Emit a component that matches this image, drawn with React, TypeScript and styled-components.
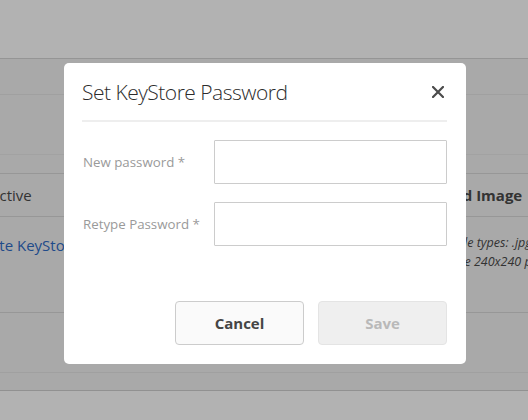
import React from 'react'
import styled, { createGlobalStyle } from 'styled-components'

const GlobalStyle = createGlobalStyle`
  html, body {
    margin: 0;
    padding: 0;
    background: #ffffff;
    font-family: "Open Sans", "Liberation Sans", sans-serif;
    overflow: hidden;
  }
  * { box-sizing: border-box; }
`

export default function App() {
  return (
    <>
      <GlobalStyle />
      <Page>
        <TopBar />
        <Content>
          <Toolbar />
          <Filler />
          <Table>
            <HeadRow>
              <LeftCell $shift={-10}>Active</LeftCell>
              <RightCell>
                <HeadText $shift={-47}>Upload Image</HeadText>
              </RightCell>
            </HeadRow>
            <BodyRow>
              <LeftCell $shift={-33}>
                <Link>Create KeyStore</Link>
              </LeftCell>
              <RightCell>
                <Note $shift={-55}>Allowed file types: .jpg, .png</Note>
                <Note $shift={-53}>Image size 240x240 px</Note>
              </RightCell>
            </BodyRow>
            <EmptyRow />
          </Table>
        </Content>
      </Page>

      <Overlay />

      <Dialog role="dialog" aria-label="Set KeyStore Password">
        <DialogHeader>
          <Title>Set KeyStore Password</Title>
          <CloseButton aria-label="Close">
            <svg width="12" height="12" viewBox="0 0 12 12">
              <path d="M1 1 L11 11 M11 1 L1 11" stroke="#4b4b4b" strokeWidth="2.2" strokeLinecap="square" />
            </svg>
          </CloseButton>
        </DialogHeader>

        <Form>
          <Field>
            <Label>New password *</Label>
            <Input type="password" />
          </Field>
          <Field>
            <Label>Retype Password *</Label>
            <Input type="password" />
          </Field>
        </Form>

        <Footer>
          <Button>Cancel</Button>
          <Button $primary disabled>Save</Button>
        </Footer>
      </Dialog>
    </>
  )
}

// Page behind the dialog
const Page = styled.div`
  width: 528px;
  height: 420px;
  display: flex;
  flex-direction: column;
`

const TopBar = styled.div`
  height: 59px;
  background: #ffffff;
  border-bottom: 1px solid #d6d6d6;
`

const Content = styled.div`
  background: #f3f3f3;
  height: 332px;
  border-bottom: 1px solid #d0d0d0;
  display: flex;
  flex-direction: column;
`

const Toolbar = styled.div`
  height: 36px;
  border-bottom: 1px solid #e6e6e6;
`

const Filler = styled.div`
  height: 60px;
  border-bottom: 1px solid #e8e8e8;
  margin-bottom: 18px;
`

const Table = styled.div`
  display: flex;
  flex-direction: column;
  border-top: 1px solid #d8d8d8;
`

const HeadRow = styled.div`
  height: 43px;
  display: flex;
  align-items: center;
  justify-content: space-between;
  border-bottom: 1px solid #d8d8d8;
  font-size: 15px;
  color: #4a4a4a;
`

const BodyRow = styled.div`
  height: 96px;
  display: flex;
  justify-content: space-between;
  border-bottom: 1px solid #d8d8d8;
  padding-top: 18px;
`

const EmptyRow = styled.div`
  height: 60px;
  border-bottom: 1px solid #e6e6e6;
`

const LeftCell = styled.div<{ $shift: number }>`
  margin-left: ${p => p.$shift}px;
  white-space: nowrap;
  font-size: 15px;
`

const RightCell = styled.div`
  width: 62px;
  white-space: nowrap;
  display: flex;
  flex-direction: column;
  align-items: flex-start;
`

const HeadText = styled.span<{ $shift: number }>`
  margin-left: ${p => p.$shift}px;
  font-weight: 700;
  font-size: 15px;
  color: #4a4a4a;
`

const Link = styled.span`
  color: #2f6cc6;
  font-size: 15px;
`

const Note = styled.span<{ $shift: number }>`
  margin-left: ${p => p.$shift}px;
  margin-top: -2px;
  margin-bottom: 1px;
  font-style: italic;
  font-size: 12.5px;
  line-height: 20px;
  color: #4a4a4a;
`

// Modal
const Overlay = styled.div`
  position: fixed;
  inset: 0;
  background: rgba(0, 0, 0, 0.3);
`

const Dialog = styled.div`
  position: fixed;
  left: 64px;
  top: 63px;
  width: 402px;
  height: 301px;
  background: #ffffff;
  border-radius: 5px;
  padding: 0 19px 0 18px;
  display: flex;
  flex-direction: column;
`

const DialogHeader = styled.div`
  height: 59px;
  display: flex;
  align-items: center;
  justify-content: space-between;
  border-bottom: 2px solid #eeeeee;
`

const Title = styled.h2`
  margin: 0;
  font-size: 21px;
  font-weight: 300;
  color: #2c2c2c;
  letter-spacing: -0.5px;
`

const CloseButton = styled.button`
  border: none;
  background: none;
  padding: 0;
  margin-right: 3px;
  width: 12px;
  height: 12px;
  display: flex;
  cursor: pointer;
`

const Form = styled.div`
  display: flex;
  flex-direction: column;
  gap: 18px;
  margin-top: 18px;
`

const Field = styled.div`
  display: flex;
  align-items: center;
`

const Label = styled.label`
  width: 132px;
  font-size: 13.3px;
  color: #9a9a9a;
  padding-left: 1px;
`

const Input = styled.input`
  width: 233px;
  height: 44px;
  border: 1px solid #cccccc;
  border-radius: 1px;
  outline: none;
  padding: 0 10px;
  font-size: 14px;
`

const Footer = styled.div`
  display: flex;
  justify-content: flex-end;
  gap: 14px;
  margin-top: auto;
  margin-bottom: 19px;
`

const Button = styled.button<{ $primary?: boolean }>`
  width: 129px;
  height: 44px;
  border-radius: 4px;
  border: 1px solid ${p => p.$primary ? '#e4e4e4' : '#cccccc'};
  background: ${p => p.$primary ? '#efefef' : '#fafafa'};
  color: ${p => p.$primary ? '#b9b9b9' : '#454545'};
  font-family: "Open Sans", "Liberation Sans", sans-serif;
  font-size: 15px;
  font-weight: 700;
  cursor: pointer;
`
